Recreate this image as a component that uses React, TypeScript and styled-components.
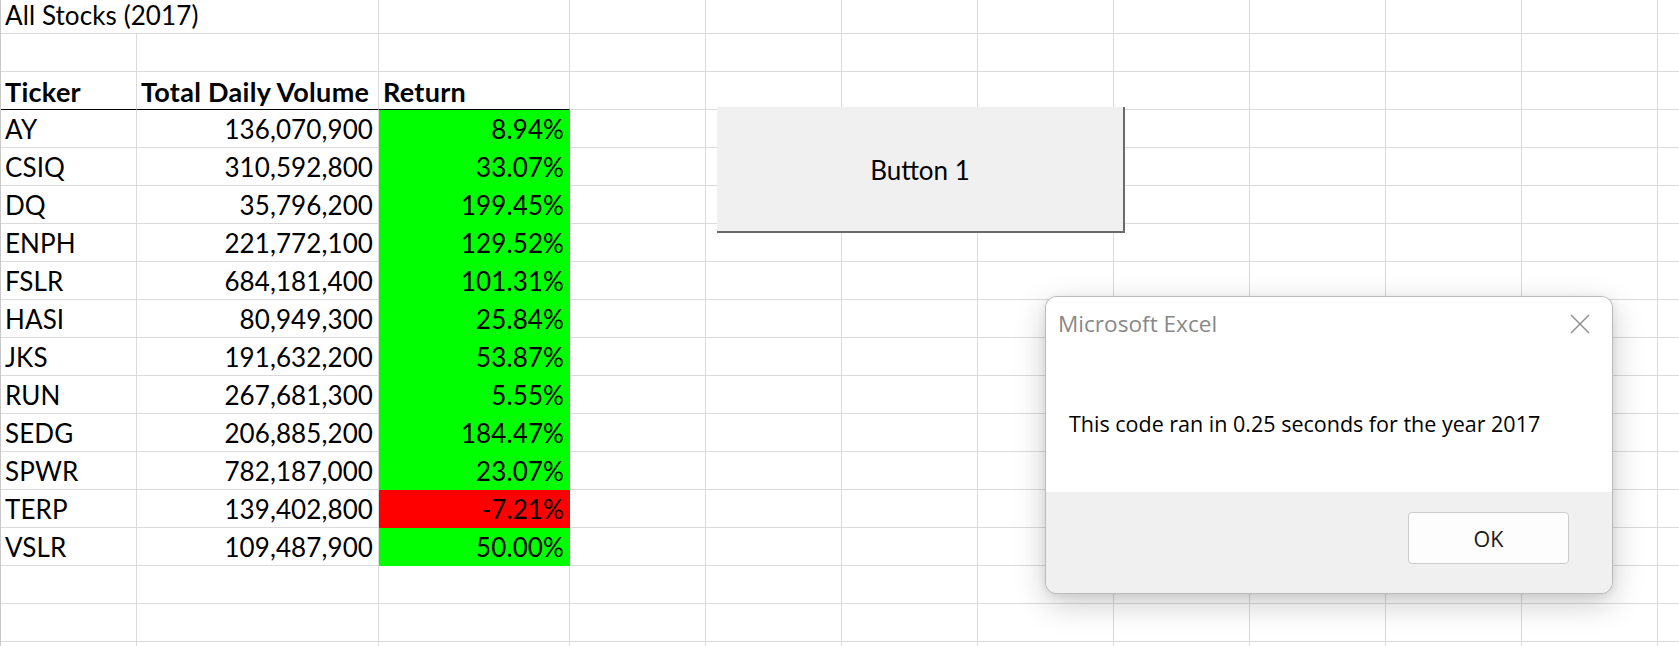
import React from "react";
import styled, { createGlobalStyle } from "styled-components";

const GRID = "#dadada";
const GREEN = "#00ff00";
const RED = "#ff0000";

const Global = createGlobalStyle`
  html, body { margin: 0; padding: 0; background: #ffffff; overflow: hidden; }
  #root { width: 1679px; height: 646px; }
`;

const Page = styled.div`
  position: relative;
  width: 1679px;
  height: 646px;
  overflow: hidden;
  background: #ffffff;
  font-family: "Lato", "Liberation Sans", sans-serif;
  color: #000;
`;

const Sheet = styled.div`
  display: grid;
  grid-template-columns: 136px 242px 191px repeat(9, 136px);
  grid-template-rows: 34px repeat(17, 38px);
  border-left: 1px solid #c8c8c8;
  width: max-content;
  font-size: 26px;
`;

const Cell = styled.div<{
  $right?: boolean;
  $bold?: boolean;
  $fill?: string;
  $span?: number;
  $underline?: boolean;
}>`
  box-sizing: border-box;
  display: flex;
  align-items: flex-end;
  justify-content: ${(p) => (p.$right ? "flex-end" : "flex-start")};
  padding: 0 5px 2px 4px;
  grid-column: span ${(p) => p.$span ?? 1};
  border-right: 1px solid ${(p) => p.$fill ?? GRID};
  border-bottom: 1px solid ${(p) => (p.$underline ? "#000" : p.$fill ?? GRID)};
  background: ${(p) => p.$fill ?? "transparent"};
  font-weight: ${(p) => (p.$bold ? 700 : 400)};
  font-size: ${(p) => (p.$bold ? "27px" : "26px")};
  letter-spacing: ${(p) => (p.$bold ? "0.3px" : "0.1px")};
  line-height: 31px;
  white-space: nowrap;
`;

const SheetButton = styled.div`
  position: absolute;
  left: 717px;
  top: 107px;
  width: 408px;
  height: 126px;
  box-sizing: border-box;
  background: #f0f0f0;
  border-right: 2px solid #6a6a6a;
  border-bottom: 2px solid #6a6a6a;
  display: flex;
  align-items: center;
  justify-content: center;
  padding-top: 2px;
  font-family: "Lato", sans-serif;
  font-size: 26px;
  line-height: 31px;
  color: #000;
`;

const Dialog = styled.div`
  position: absolute;
  left: 1045px;
  top: 296px;
  width: 568px;
  height: 298px;
  box-sizing: border-box;
  border: 1px solid rgba(0, 0, 0, 0.22);
  border-radius: 12px;
  overflow: hidden;
  display: flex;
  flex-direction: column;
  box-shadow: 0 10px 32px rgba(0, 0, 0, 0.2), 0 2px 8px rgba(0, 0, 0, 0.08);
  font-family: "Open Sans", "Noto Sans", sans-serif;
  background: #f0f0f0;
`;

const DialogBody = styled.div`
  height: 195px;
  background: #ffffff;
  display: flex;
  flex-direction: column;
`;

const TitleBar = styled.div`
  display: flex;
  justify-content: space-between;
  align-items: flex-start;
  padding: 12px 22px 0 12px;
`;

const Title = styled.div`
  font-size: 22.6px;
  line-height: 30px;
  color: #888888;
`;

const CloseIcon = styled.svg`
  margin-top: 5px;
  width: 20px;
  height: 20px;
  display: block;
`;

const Message = styled.div`
  margin-top: 70px;
  padding-left: 23px;
  font-size: 21.5px;
  line-height: 29px;
  color: #000;
`;

const Footer = styled.div`
  flex: 1;
  display: flex;
  justify-content: flex-end;
  align-items: flex-start;
  padding: 20px 43px 0 0;
  background: #f0f0f0;
`;

const OkButton = styled.div`
  box-sizing: border-box;
  width: 161px;
  height: 52px;
  border: 1px solid #cccccc;
  border-radius: 4px;
  background: #fdfdfd;
  display: flex;
  align-items: center;
  justify-content: center;
  font-size: 21.5px;
  line-height: 29px;
  color: #1a1a1a;
`;

type Stock = { ticker: string; volume: string; ret: string };

const stocks: Stock[] = [
  { ticker: "AY", volume: "136,070,900", ret: "8.94%" },
  { ticker: "CSIQ", volume: "310,592,800", ret: "33.07%" },
  { ticker: "DQ", volume: "35,796,200", ret: "199.45%" },
  { ticker: "ENPH", volume: "221,772,100", ret: "129.52%" },
  { ticker: "FSLR", volume: "684,181,400", ret: "101.31%" },
  { ticker: "HASI", volume: "80,949,300", ret: "25.84%" },
  { ticker: "JKS", volume: "191,632,200", ret: "53.87%" },
  { ticker: "RUN", volume: "267,681,300", ret: "5.55%" },
  { ticker: "SEDG", volume: "206,885,200", ret: "184.47%" },
  { ticker: "SPWR", volume: "782,187,000", ret: "23.07%" },
  { ticker: "TERP", volume: "139,402,800", ret: "-7.21%" },
  { ticker: "VSLR", volume: "109,487,900", ret: "50.00%" },
];

const TOTAL_COLS = 12;
const TOTAL_ROWS = 18;

const EmptyCells: React.FC<{ count: number; prefix: string }> = ({ count, prefix }) => (
  <>
    {Array.from({ length: count }).map((_, i) => (
      <Cell key={`${prefix}-${i}`} />
    ))}
  </>
);

export default function App() {
  const rows: React.ReactNode[] = [];

  rows.push(
    <React.Fragment key="r1">
      <Cell $span={2}>All Stocks (2017)</Cell>
      <EmptyCells count={TOTAL_COLS - 2} prefix="r1" />
    </React.Fragment>
  );

  rows.push(
    <React.Fragment key="r2">
      <EmptyCells count={TOTAL_COLS} prefix="r2" />
    </React.Fragment>
  );

  rows.push(
    <React.Fragment key="r3">
      <Cell $bold $underline>Ticker</Cell>
      <Cell $bold $underline>Total Daily Volume</Cell>
      <Cell $bold $underline>Return</Cell>
      <EmptyCells count={TOTAL_COLS - 3} prefix="r3" />
    </React.Fragment>
  );

  stocks.forEach((s) => {
    const fill = s.ret.startsWith("-") ? RED : GREEN;
    rows.push(
      <React.Fragment key={s.ticker}>
        <Cell>{s.ticker}</Cell>
        <Cell $right>{s.volume}</Cell>
        <Cell $right $fill={fill}>{s.ret}</Cell>
        <EmptyCells count={TOTAL_COLS - 3} prefix={s.ticker} />
      </React.Fragment>
    );
  });

  for (let r = rows.length; r < TOTAL_ROWS; r++) {
    rows.push(
      <React.Fragment key={`e${r}`}>
        <EmptyCells count={TOTAL_COLS} prefix={`e${r}`} />
      </React.Fragment>
    );
  }

  return (
    <Page>
      <Global />
      <Sheet>{rows}</Sheet>

      <SheetButton>Button 1</SheetButton>

      <Dialog>
        <DialogBody>
          <TitleBar>
            <Title>Microsoft Excel</Title>
            <CloseIcon viewBox="0 0 20 20">
              <path d="M1 1 L19 19 M19 1 L1 19" stroke="#8b8b8b" strokeWidth="1.4" fill="none" />
            </CloseIcon>
          </TitleBar>
          <Message>This code ran in 0.25 seconds for the year 2017</Message>
        </DialogBody>
        <Footer>
          <OkButton>OK</OkButton>
        </Footer>
      </Dialog>
    </Page>
  );
}
